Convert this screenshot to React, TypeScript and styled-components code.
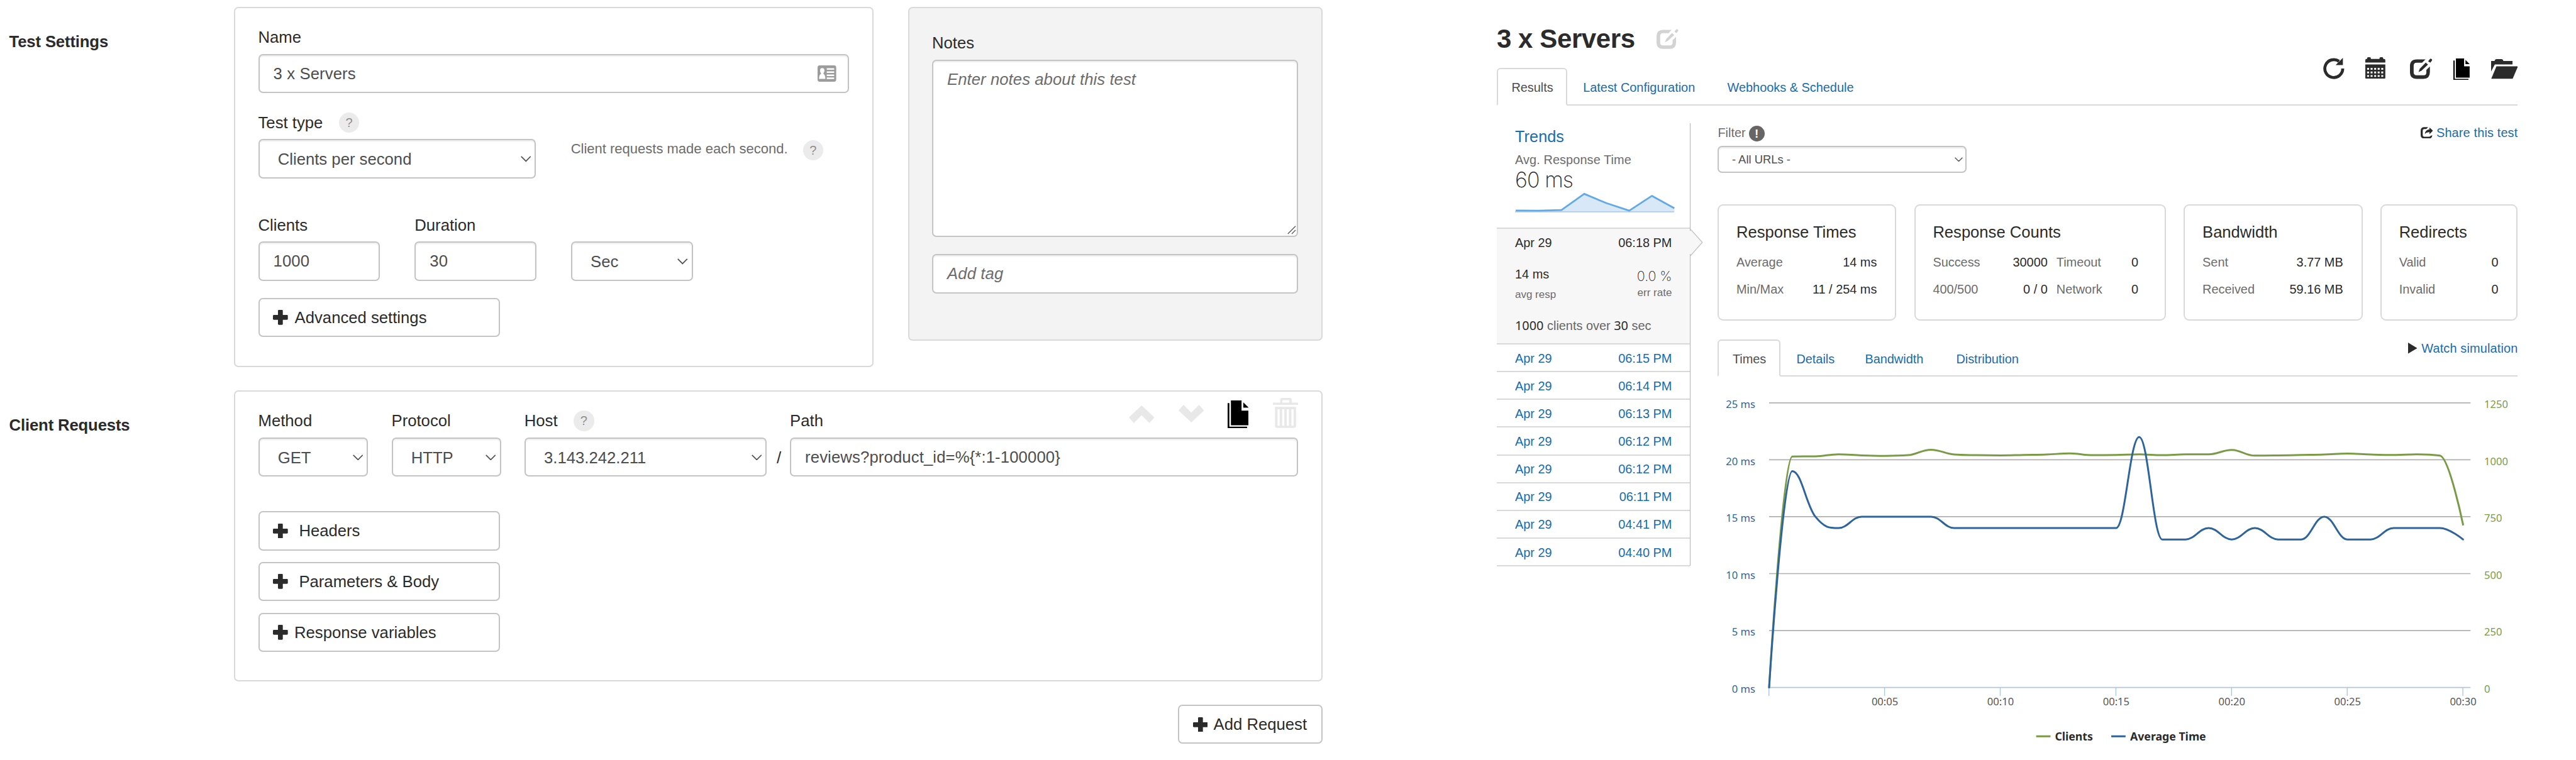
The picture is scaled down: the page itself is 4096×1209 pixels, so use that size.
import React from "react";
import styled, { createGlobalStyle, css } from "styled-components";

const SANS = `"Liberation Sans", Arial, Helvetica, sans-serif`;
const CHART = `"Noto Sans", "Open Sans", sans-serif`;

const INK = "#2b2b2b";
const FIELD = "#4d4d4d";
const MUTED = "#6c6c6c";
const LINK = "#166cae";
const LINE = "#d9d9d9";
const CONTROL = "#c4c4c4";

const GlobalStyle = createGlobalStyle`
  *, *::before, *::after { box-sizing: border-box; }
  body { margin: 0; background: #fff; color: ${INK}; font-family: ${SANS}; }
  svg { display: block; flex: none; }
`;

const Page = styled.div`
  display: flex;
  gap: 277px;
  width: 4096px;
  height: 1209px;
  overflow: hidden;
  font-size: 25.7px;
  line-height: 32px;
`;

/* ---------- configuration form ---------- */

const Form = styled.main`
  width: 2102.9px;
  flex: none;
  padding-top: 11.4px;
`;

const Section = styled.section`
  display: flex;
  margin-bottom: 36.9px;
`;

const SectionTitle = styled.h2`
  width: 372px;
  flex: none;
  margin: 39.1px 0 0;
  padding-left: 14.6px;
  font-size: 25.7px;
  line-height: 32px;
  font-weight: 700;
  letter-spacing: -0.15px;
`;

const Card = styled.div<{ $w: number; $h: number; $tint?: boolean; $top?: number; $ml?: number }>`
  width: ${(p) => p.$w}px;
  height: ${(p) => p.$h}px;
  margin-left: ${(p) => p.$ml ?? 0}px;
  padding: ${(p) => p.$top ?? 29.8}px 36.5px 0;
  border: 2px solid ${LINE};
  border-radius: 7px;
  background: ${(p) => (p.$tint ? "#f3f3f3" : "#fff")};
`;

const Row = styled.div<{ $gap?: number; $mt?: number }>`
  display: flex;
  gap: ${(p) => p.$gap ?? 0}px;
  margin-top: ${(p) => p.$mt ?? 0}px;
`;

const FieldBox = styled.div<{ $w?: number; $mt?: number; $ml?: number }>`
  width: ${(p) => (p.$w ? `${p.$w}px` : "auto")};
  margin-top: ${(p) => p.$mt ?? 0}px;
  margin-left: ${(p) => p.$ml ?? 0}px;
`;

const Label = styled.div`
  display: flex;
  justify-content: space-between;
  height: 32px;
  margin-bottom: 10.5px;
  white-space: nowrap;
`;

const LabelText = styled.span`
  display: flex;
  align-items: center;
`;

const Help = styled.span<{ $ml: number }>`
  display: inline-flex;
  align-items: center;
  justify-content: center;
  width: 32.6px;
  height: 32.6px;
  margin-left: ${(p) => p.$ml}px;
  border-radius: 50%;
  background: #ebebeb;
  color: #8e8e8e;
  font-size: 20px;
`;

const control = css`
  display: flex;
  align-items: center;
  width: 100%;
  height: 62.4px;
  border: 2px solid ${CONTROL};
  border-radius: 7px;
  background: #fff;
  box-shadow: inset 0 2px 2px rgba(0, 0, 0, 0.08);
  color: ${FIELD};
`;

const TextField = styled.div<{ $hint?: boolean }>`
  ${control}
  justify-content: space-between;
  padding: 0 18px 0 22px;
  font-style: ${(p) => (p.$hint ? "italic" : "normal")};
  color: ${(p) => (p.$hint ? MUTED : FIELD)};
  letter-spacing: 0.12px;
`;

const TextArea = styled.div`
  ${control}
  align-items: flex-start;
  justify-content: space-between;
  height: 281.8px;
  padding: 13.3px 1px 2px 22px;
  font-style: italic;
  color: ${MUTED};
  letter-spacing: 0.06px;

  svg { align-self: flex-end; }
`;

const SelectBox = styled.div`
  ${control}
  justify-content: space-between;
  padding: 1.4px 6px 0 29.2px;
`;

const Slash = styled.div`
  display: flex;
  align-items: center;
  align-self: flex-end;
  justify-content: center;
  width: 36.8px;
  height: 60px;
  padding: 0 0 1px 2px;
`;

const Helper = styled.div`
  display: flex;
  align-items: flex-start;
  padding: 42.1px 0 0 55.4px;
  font-size: 22px;
  color: ${MUTED};

  ${Help} { margin-top: 1.6px; }
`;

const Button = styled.button<{ $w: number; $gap: number }>`
  display: flex;
  align-items: center;
  gap: ${(p) => p.$gap}px;
  width: ${(p) => p.$w}px;
  height: 62.2px;
  padding: 0 0 0 21.6px;
  border: 2px solid ${CONTROL};
  border-radius: 7px;
  background: #fff;
  color: ${INK};
  font: 25.7px/32px ${SANS};
  white-space: nowrap;
`;

const Stack = styled.div<{ $mt: number; $gap: number }>`
  display: flex;
  flex-direction: column;
  gap: ${(p) => p.$gap}px;
  margin-top: ${(p) => p.$mt}px;
`;

const RequestTools = styled.span`
  display: flex;
  align-items: center;
  height: 48px;
  margin-top: -20.5px;
`;

const ToolSlot = styled.span<{ $ml: number; $dy?: number }>`
  margin: ${(p) => p.$dy ?? 0}px 0 0 ${(p) => p.$ml}px;
`;

const FormFooter = styled.div`
  display: flex;
  justify-content: flex-end;
`;

/* ---------- results ---------- */

const Results = styled.aside`
  width: 1623.5px;
  flex: none;
  font-size: 19.9px;
  line-height: 24px;
`;

const Header = styled.header`
  display: flex;
  justify-content: space-between;
  align-items: flex-end;
  height: 167.6px;
  border-bottom: 2px solid ${LINE};
`;

const Title = styled.h1`
  display: flex;
  align-items: center;
  gap: 34.5px;
  height: 50px;
  margin: 0 0 21px;
  font-size: 42px;
  line-height: 50px;
  letter-spacing: -0.4px;
`;

const Tabs = styled.nav`
  display: flex;
  margin-bottom: -2px;
`;

const Tab = styled.a<{ $active?: boolean; $w: number; $h: number }>`
  display: flex;
  align-items: center;
  width: ${(p) => p.$w}px;
  height: ${(p) => p.$h}px;
  padding: 3px 0 0 ${(p) => (p.$active ? 21.5 : 23.5)}px;
  border: ${(p) => (p.$active ? `2px solid ${LINE}` : "2px solid transparent")};
  border-bottom-color: ${(p) => (p.$active ? "#fff" : "transparent")};
  border-radius: 6px 6px 0 0;
  color: ${(p) => (p.$active ? FIELD : LINK)};
  white-space: nowrap;
`;

const Toolbar = styled.div`
  display: flex;
  align-items: center;
  height: 36px;
  margin-bottom: 38.6px;
`;

const Body = styled.div`
  display: flex;
`;

const History = styled.div`
  width: 308px;
  height: 703.5px;
  margin-top: 28.9px;
  flex: none;
  border-right: 1.5px solid #b2b2b2;
`;

const Trends = styled.div`
  height: 165.6px;
  padding: 6px 0 0 29.1px;
  color: ${MUTED};
  letter-spacing: 0.1px;
`;

const TrendsLink = styled.div`
  margin-bottom: 9.7px;
  font-size: 25.2px;
  line-height: 30px;
  color: ${LINK};
`;

const BigValue = styled.div`
  height: 38px;
  font: 200 34px/40px Inter, ${SANS};
  letter-spacing: -0.9px;
  color: ${INK};
`;

const Run = styled.div`
  display: flex;
  align-items: center;
  justify-content: space-between;
  height: 44.13px;
  padding: 1px 28.5px 0 29.1px;
  border-bottom: 2px solid ${LINE};
  color: ${LINK};
`;

const Selected = styled.div`
  position: relative;
  height: 186px;
  padding: 10px 28.5px 0 29.1px;
  border-top: 2px solid ${LINE};
  border-bottom: 2px solid ${LINE};
  background: #f7f7f7;
`;

const Pointer = styled.svg`
  position: absolute;
  left: 100%;
  top: 0;
`;

const Split = styled.div<{ $mt?: number }>`
  display: flex;
  justify-content: space-between;
  margin-top: ${(p) => p.$mt ?? 0}px;
  white-space: nowrap;
`;

const FilterBar = styled(Split)`
  height: 24px;
  align-items: center;
`;

const Small = styled.span<{ $lift?: number }>`
  margin-top: ${(p) => -(p.$lift ?? 0)}px;
  font-size: 17px;
  line-height: 20px;
  color: ${MUTED};
`;

const LightValue = styled.span`
  height: 21px;
  margin-top: 3px;
  font: 200 21.5px/24px Inter, ${SANS};
  letter-spacing: -0.1px;
`;

const Load = styled.div`
  margin-top: 26.6px;
  color: #666;
  white-space: nowrap;

  b {
    font: 400 19.9px/24px ${CHART};
    color: ${INK};
  }
`;

const Main = styled.div`
  width: 1272px;
  margin-left: 43.5px;
  padding-top: 31.5px;
`;

const Muted = styled.span`
  display: flex;
  align-items: center;
  color: ${MUTED};
`;

const Alert = styled.span`
  display: inline-flex;
  align-items: center;
  justify-content: center;
  width: 25px;
  height: 25px;
  margin: 3px 0 0 5px;
  border-radius: 50%;
  background: #666;
  color: #fff;
  font-size: 19px;
  font-weight: 700;
`;

const IconLink = styled.a<{ $gap: number }>`
  display: flex;
  align-items: center;
  gap: ${(p) => p.$gap}px;
  color: ${LINK};
  letter-spacing: 0.15px;
`;

const UrlSelect = styled(SelectBox)`
  width: 395.5px;
  height: 42.9px;
  margin-top: 9.2px;
  padding: 0 3.5px 0 20.5px;
  font-size: 18.4px;
`;

const Cards = styled.div`
  display: grid;
  grid-template-columns: 284px 400.3px 284.2px 218.4px;
  gap: 28.4px;
  margin-top: 49.6px;
`;

const Stat = styled.div<{ $pr?: number }>`
  height: 185.5px;
  padding: 27.2px ${(p) => p.$pr ?? 29}px 0 27.6px;
  border: 2px solid ${LINE};
  border-radius: 9px;
`;

const StatTitle = styled.div`
  font-size: 25.6px;
  line-height: 30px;
  margin-bottom: 21.5px;
  white-space: nowrap;
`;

const StatGrid = styled.div<{ $cols: string }>`
  display: grid;
  grid-template-columns: ${(p) => p.$cols};
  gap: 18.5px 14px;
`;

const Pair = styled.div`
  display: flex;
  justify-content: space-between;
  white-space: nowrap;

  span:first-child { color: ${MUTED}; }
`;

const ChartTabs = styled.div`
  display: flex;
  justify-content: space-between;
  height: 59.5px;
  margin-top: 29.3px;
  border-bottom: 2px solid ${LINE};
`;

const Watch = styled(IconLink)`
  height: 24px;
  margin-top: 2.3px;
`;

/* ---------- icons ---------- */

const Plus = () => (
  <svg width="23.7" height="23.7" viewBox="0 0 24 24" fill={INK}>
    <rect x="8.1" y="0" width="7.8" height="24" rx="1.4" />
    <rect x="0" y="8.1" width="24" height="7.8" rx="1.4" />
  </svg>
);

const Caret = ({ w = 16.5, c = "#555" }: { w?: number; c?: string }) => (
  <svg width={w} height={w * 0.58} viewBox="0 0 16.5 9.6" fill="none" stroke={c} strokeWidth="1.8">
    <path d="M0.7 0.8 L8.25 8.4 L15.8 0.8" />
  </svg>
);

const IdCard = () => (
  <svg width="29.6" height="26" viewBox="0 0 29.6 26">
    <rect width="29.6" height="26" rx="3.4" fill="#9c9c9c" />
    <path
      fill="#fff"
      d="M7.4 4.2a3.5 4 0 0 1 3.5 4c0 1.9-.8 3.2-1.5 4v1.2c1.6.9 3 3 3 8.2H2.4c0-5.2 1.4-7.3 3-8.2v-1.2c-.7-.8-1.5-2.1-1.5-4a3.5 4 0 0 1 3.5-4z"
    />
    <path fill="#fff" d="M14.6 4.6h11.8v2.5H14.6zM14.6 9.5h11.8V12H14.6zM14.6 14.4h11.8v2.5H14.6zM14.6 19.3h11.8v2.5H14.6z" />
  </svg>
);

const Resize = () => (
  <svg width="14" height="14" viewBox="0 0 14 14" stroke="#555" strokeWidth="1.3">
    <path d="M0.8 13 L13 0.8 M7 13 L13 7" />
  </svg>
);

const ChevronUp = () => (
  <svg width="40.5" height="28" viewBox="0 0 40.5 28" fill="#e8e8e8">
    <path d="M20.2 0 L40.5 19 L32.6 28 L20.2 15.4 L7.9 28 L0 19 Z" />
  </svg>
);

const ChevronDown = () => (
  <svg width="40.5" height="28" viewBox="0 0 40.5 28" fill="#e8e8e8">
    <path d="M20.2 28 L40.5 9 L32.6 0 L20.2 12.6 L7.9 0 L0 9 Z" />
  </svg>
);

const Copy = ({ w, h }: { w: number; h: number }) => (
  <svg width={w} height={h} viewBox="926 44 109 145" preserveAspectRatio="none" fill="#000">
    <path d="M943 44h55v53h37v76h-92z" />
    <path d="M1007 54l28 28h-28z" />
    <path d="M926 58h9v123h92v8H926z" />
  </svg>
);

const Trash = () => (
  <svg width="40.2" height="47.8" viewBox="0 0 40.2 47.8" fill="#e8e8e8">
    <path fillRule="evenodd" d="M11.6 7.4V3q0-3 3-3h12.2q3 0 3 3v4.4h10.4v3.6H0V7.4zM15.2 7.4h11V3.6h-11z" />
    <path
      fillRule="evenodd"
      d="M3.4 14.2h33.4v30q0 3.6-3.6 3.6H7q-3.6 0-3.6-3.6zM7.3 18h3.5v26.2H7.3zM14.7 18h3.5v26.2h-3.5zM22 18h3.5v26.2H22zM29.4 18h3.5v26.2h-3.5z"
    />
  </svg>
);

const Refresh = () => (
  <svg width="33.5" height="33.7" viewBox="54 42 141 142">
    <path d="M185 114 A60 60 0 1 1 160 65.4" fill="none" stroke={INK} strokeWidth="20" />
    <path d="M186 42v48h-49z" fill={INK} />
  </svg>
);

const holes = [108, 132, 156]
  .flatMap((y) => [352, 375.5, 399.5, 423, 447].map((x) => `M${x} ${y}h13v12h-13z`))
  .join("");

const Calendar = () => (
  <svg width="31.8" height="34.2" viewBox="340 36 134 144" fill={INK}>
    <path d="M340 72V56q0-8 8-8h4v-5q0-7 7-7h11q7 0 7 7v5h58v-5q0-7 7-7h11q7 0 7 7v5h6q8 0 8 8v16z" />
    <path fillRule="evenodd" d={`M340 84h134v90q0 6-6 6H346q-6 0-6-6z${holes}`} />
  </svg>
);

const Edit = ({ w, c }: { w: number; c: string }) => (
  <svg width={w} height={(w * 138) / 152} viewBox="639 48 152 138" fill={c}>
    <path d="M744 54H684Q639 54 639 99V141Q639 186 684 186H730Q774 186 774 141V102L750 126V144Q750 162 732 162H684Q664 162 664 142V98Q664 77 684 77H721Z" />
    <path d="M746 76L761 90L717 131L697 140L706 117Z" />
    <path d="M762 67L774 52Q777 48 782 50Q791 53 789 61L777 77Z" />
  </svg>
);

const Folder = () => (
  <svg width="42.8" height="31.3" viewBox="1179 54 181 132" fill={INK}>
    <path d="M1179 66h23q4-12 12-12h36q8 0 12 12h61v24H1204L1179 137z" />
    <path d="M1215 102h145l-36 84h-144z" />
  </svg>
);

const Share = () => (
  <svg width="19.9" height="18.8" viewBox="713 501 84 79" fill={INK}>
    <path d="M763 502H738Q713 502 713 527V554Q713 579 738 579H768Q790 579 791 556L777 562Q776 566 768 566H738Q727 566 727 554V527Q727 515 738 515H751Z" />
    <path d="M772 504L796 526L772 549V536Q752 535 741 547Q744 520 772 517Z" />
  </svg>
);

const Play = () => (
  <svg width="14.6" height="17.6" viewBox="0 0 14.6 17.6" fill={INK}>
    <path d="M0 0L14.6 8.8L0 17.6z" />
  </svg>
);

/* ---------- charts ---------- */

const Sparkline = () => (
  <svg width="256" height="34" viewBox="0 0 256 34">
    <path
      d="M1 32V30.6L37 31L73.4 30.2L110 4.4L145 19L181.6 31L217.5 7.6L253.3 27.3V33H1z"
      fill="#d8e8f7"
    />
    <path d="M0 33H253" stroke="#aac8e6" strokeWidth="1.5" />
    <path
      d="M1 30.8L37 31.1L73.8 30.2L110 4.4L145 19L181.6 31.1L217.5 7.6L253.3 27.3"
      fill="none"
      stroke="#62a9e8"
      strokeWidth="2.8"
      strokeLinejoin="round"
    />
  </svg>
);

const avgTime = [
  0, 19, 15, 14, 15, 15, 15, 15, 14, 14, 14, 14, 14, 14, 14, 14, 22, 13, 13, 14, 13, 14, 13, 13, 15, 13, 13, 14,
  14, 14, 13,
];
const clients = [
  0, 1014, 1015, 1024, 1019, 1017, 1020, 1044, 1023, 1020, 1019, 1021, 1023, 1028, 1020, 1021, 1024, 1020, 1024,
  1024, 1043, 1018, 1019, 1021, 1023, 1027, 1023, 1021, 1024, 1018, 715,
];

const LEFT = 82;
const STEP = 36.78;
const BASE = 494.6;
const HEIGHT = 452.8;

/* Smooth curve whose control points never overshoot the neighbouring values. */
function spline(values: number[], max: number) {
  const pts = values.map((v, i) => ({ x: LEFT + i * STEP, y: BASE - (v / max) * HEIGHT }));
  let d = `M${pts[0].x} ${pts[0].y}`;
  let out = pts[0];
  for (let i = 1; i < pts.length; i++) {
    const p = pts[i];
    const prev = pts[i - 1];
    const next = pts[i + 1];
    let inX = p.x;
    let inY = p.y;
    let nextOut = p;
    if (next) {
      inX = (1.5 * p.x + prev.x) / 2.5;
      inY = (1.5 * p.y + prev.y) / 2.5;
      const outX = (1.5 * p.x + next.x) / 2.5;
      let outY = (1.5 * p.y + next.y) / 2.5;
      const fix = ((outY - inY) * (outX - p.x)) / (outX - inX) + p.y - outY;
      inY += fix;
      outY += fix;
      const hi = Math.max(prev.y, p.y);
      const lo = Math.min(prev.y, p.y);
      if (inY > hi) { inY = hi; outY = 2 * p.y - inY; }
      else if (inY < lo) { inY = lo; outY = 2 * p.y - inY; }
      const hi2 = Math.max(next.y, p.y);
      const lo2 = Math.min(next.y, p.y);
      if (outY > hi2) { outY = hi2; inY = 2 * p.y - outY; }
      else if (outY < lo2) { outY = lo2; inY = 2 * p.y - outY; }
      nextOut = { x: outX, y: outY };
    }
    d += `C${out.x} ${out.y} ${inX} ${inY} ${p.x} ${p.y}`;
    out = nextOut;
  }
  return d;
}

const AxisText = styled.text<{ $c: string }>`
  font: 16.6px ${CHART};
  fill: ${(p) => p.$c};
`;

const LegendText = styled.text`
  font: 700 17.7px ${CHART};
  fill: ${INK};
`;

const GREEN = "#7a9b46";
const BLUE = "#2d649c";

const TimesChart = () => (
  <svg width="1300" height="609" viewBox="0 0 1300 609">
    {[0, 1, 2, 3, 4, 5].map((i) => {
      const y = BASE - i * 90.56;
      return (
        <g key={i}>
          <path d={`M82 ${y}H1197.3`} stroke={i ? "#b0b0b0" : "#afc8dd"} strokeWidth="1.7" />
          <AxisText x={60} y={y + 8.4} textAnchor="end" $c={BLUE}>{i * 5} ms</AxisText>
          <AxisText x={1219} y={y + 8.4} $c={GREEN}>{i * 250}</AxisText>
        </g>
      );
    })}
    {[0, 1, 2, 3, 4, 5, 6].map((i) => {
      const x = 81.7 + i * 183.9;
      return (
        <g key={i}>
          <path d={`M${x} ${BASE}v13.5`} stroke="#afc8dd" strokeWidth="1.4" />
          {i > 0 && (
            <AxisText x={x + 0.5} y={522.8} textAnchor="middle" $c="#555">
              {`00:${String(i * 5).padStart(2, "0")}`}
            </AxisText>
          )}
        </g>
      );
    })}
    <g fill="none" strokeWidth="3" strokeLinejoin="round" strokeLinecap="round">
      <path d={spline(clients, 1250)} stroke={GREEN} />
      <path d={spline(avgTime, 25)} stroke={BLUE} />
    </g>
    <path d="M506.6 572.3h22.8" stroke={GREEN} strokeWidth="3" />
    <LegendText x={536.4} y={578.6}>Clients</LegendText>
    <path d="M626 572.3h22.8" stroke={BLUE} strokeWidth="3" />
    <LegendText x={656} y={578.6}>Average Time</LegendText>
  </svg>
);

/* ---------- page ---------- */

const runs = ["06:15 PM", "06:14 PM", "06:13 PM", "06:12 PM", "06:12 PM", "06:11 PM", "04:41 PM", "04:40 PM"];

const stats: { title: string; cols: string; pr?: number; pairs: [string, string][] }[] = [
  { title: "Response Times", cols: "1fr", pairs: [["Average", "14 ms"], ["Min/Max", "11 / 254 ms"]] },
  {
    title: "Response Counts",
    cols: "182.4px 1fr",
    pr: 42,
    pairs: [["Success", "30000"], ["Timeout", "0"], ["400/500", "0 / 0"], ["Network", "0"]],
  },
  { title: "Bandwidth", cols: "1fr", pairs: [["Sent", "3.77 MB"], ["Received", "59.16 MB"]] },
  { title: "Redirects", cols: "1fr", pairs: [["Valid", "0"], ["Invalid", "0"]] },
];

export default function App() {
  return (
    <Page>
      <GlobalStyle />
      <Form>
        <Section>
          <SectionTitle>Test Settings</SectionTitle>
          <Card $w={1016.5} $h={573}>
            <FieldBox>
              <Label>Name</Label>
              <TextField>3 x Servers<IdCard /></TextField>
            </FieldBox>
            <Row $mt={30.8}>
              <FieldBox $w={441.8}>
                <Label><LabelText>Test type<Help $ml={25.5}>?</Help></LabelText></Label>
                <SelectBox>Clients per second<Caret /></SelectBox>
              </FieldBox>
              <Helper>Client requests made each second.<Help $ml={24}>?</Help></Helper>
            </Row>
            <Row $gap={55.1} $mt={58}>
              <FieldBox $w={193.7}>
                <Label>Clients</Label>
                <TextField>1000</TextField>
              </FieldBox>
              <FieldBox $w={193.5}>
                <Label>Duration</Label>
                <TextField>30</TextField>
              </FieldBox>
              <FieldBox $w={193.9} $mt={42.5}>
                <SelectBox>Sec<Caret /></SelectBox>
              </FieldBox>
            </Row>
            <Stack $mt={27.5} $gap={0}>
              <Button $w={384} $gap={10.8}><Plus />Advanced settings</Button>
            </Stack>
          </Card>
          <Card $w={659.4} $h={531} $tint $top={38.9} $ml={55}>
            <FieldBox>
              <Label>Notes</Label>
              <TextArea>Enter notes about this test<Resize /></TextArea>
            </FieldBox>
            <FieldBox $mt={27.6}>
              <TextField $hint>Add tag</TextField>
            </FieldBox>
          </Card>
        </Section>

        <Section>
          <SectionTitle>Client Requests</SectionTitle>
          <Card $w={1730.9} $h={463.1} $top={30}>
            <Row>
              <FieldBox $w={174.5}>
                <Label>Method</Label>
                <SelectBox>GET<Caret /></SelectBox>
              </FieldBox>
              <FieldBox $w={174.4} $ml={37.5}>
                <Label>Protocol</Label>
                <SelectBox>HTTP<Caret /></SelectBox>
              </FieldBox>
              <FieldBox $w={385.5} $ml={36.9}>
                <Label><LabelText>Host<Help $ml={25.5}>?</Help></LabelText></Label>
                <SelectBox>3.143.242.211<Caret /></SelectBox>
              </FieldBox>
              <Slash>/</Slash>
              <FieldBox $w={808.3}>
                <Label>
                  Path
                  <RequestTools>
                    <ToolSlot $ml={0} $dy={4}><ChevronUp /></ToolSlot>
                    <ToolSlot $ml={38.3} $dy={1.5}><ChevronDown /></ToolSlot>
                    <ToolSlot $ml={37.3} $dy={4}><Copy w={33.5} h={44.3} /></ToolSlot>
                    <ToolSlot $ml={38.8}><Trash /></ToolSlot>
                  </RequestTools>
                </Label>
                <TextField>{"reviews?product_id=%{*:1-100000}"}</TextField>
              </FieldBox>
            </Row>
            <Stack $mt={55.2} $gap={18.5}>
              <Button $w={384} $gap={17.6}><Plus />Headers</Button>
              <Button $w={384} $gap={17.6}><Plus />Parameters &amp; Body</Button>
              <Button $w={384} $gap={10.2}><Plus />Response variables</Button>
            </Stack>
          </Card>
        </Section>

        <FormFooter>
          <Button $w={229.8} $gap={9.2}><Plus />Add Request</Button>
        </FormFooter>
      </Form>

      <Results>
        <Header>
          <div>
            <Title>3 x Servers<Edit w={35} c="#d3d3d3" /></Title>
            <Tabs>
              <Tab $active $w={111.8} $h={59.6}>Results</Tab>
              <Tab $w={229.4} $h={59.6}>Latest Configuration</Tab>
              <Tab $w={240} $h={59.6}>Webhooks &amp; Schedule</Tab>
            </Tabs>
          </div>
          <Toolbar>
            <ToolSlot $ml={0}><Refresh /></ToolSlot>
            <ToolSlot $ml={33.6} $dy={-2}><Calendar /></ToolSlot>
            <ToolSlot $ml={39.2} $dy={1}><Edit w={35.7} c={INK} /></ToolSlot>
            <ToolSlot $ml={32.7} $dy={1.5}><Copy w={25.9} h={34.4} /></ToolSlot>
            <ToolSlot $ml={34} $dy={2}><Folder /></ToolSlot>
          </Toolbar>
        </Header>

        <Body>
          <History>
            <Trends>
              <TrendsLink>Trends</TrendsLink>
              Avg. Response Time
              <BigValue>60 ms</BigValue>
              <Sparkline />
            </Trends>
            <Selected>
              <Pointer width="22" height="46" viewBox="0 0 22 46">
                <path d="M-2 1L20 21.5L-2 42.5z" fill="#f7f7f7" />
                <path d="M1.2 1L19.8 21.5L1.2 42.5" fill="none" stroke="#c4c4c4" strokeWidth="1.4" />
              </Pointer>
              <Split><span>Apr 29</span><span>06:18 PM</span></Split>
              <Split $mt={25.5}><span>14 ms</span><LightValue>0.0 %</LightValue></Split>
              <Split $mt={11.6}><Small>avg resp</Small><Small $lift={3.5}>err rate</Small></Split>
              <Load><b>1000</b> clients over <b>30</b> sec</Load>
            </Selected>
            {runs.map((time, i) => (
              <Run key={i}><span>Apr 29</span><span>{time}</span></Run>
            ))}
          </History>

          <Main>
            <FilterBar>
              <Muted>Filter<Alert>!</Alert></Muted>
              <IconLink $gap={5.5}><Share />Share this test</IconLink>
            </FilterBar>
            <UrlSelect>- All URLs -<Caret w={13} /></UrlSelect>

            <Cards>
              {stats.map((s) => (
                <Stat key={s.title} $pr={s.pr}>
                  <StatTitle>{s.title}</StatTitle>
                  <StatGrid $cols={s.cols}>
                    {s.pairs.map(([label, value]) => (
                      <Pair key={label}><span>{label}</span><span>{value}</span></Pair>
                    ))}
                  </StatGrid>
                </Stat>
              ))}
            </Cards>

            <ChartTabs>
              <Tabs>
                <Tab $active $w={99.5} $h={59.5}>Times</Tab>
                <Tab $w={109} $h={59.5}>Details</Tab>
                <Tab $w={145} $h={59.5}>Bandwidth</Tab>
                <Tab $w={150} $h={59.5}>Distribution</Tab>
              </Tabs>
              <Watch $gap={7}><Play />Watch simulation</Watch>
            </ChartTabs>
            <TimesChart />
          </Main>
        </Body>
      </Results>
    </Page>
  );
}
